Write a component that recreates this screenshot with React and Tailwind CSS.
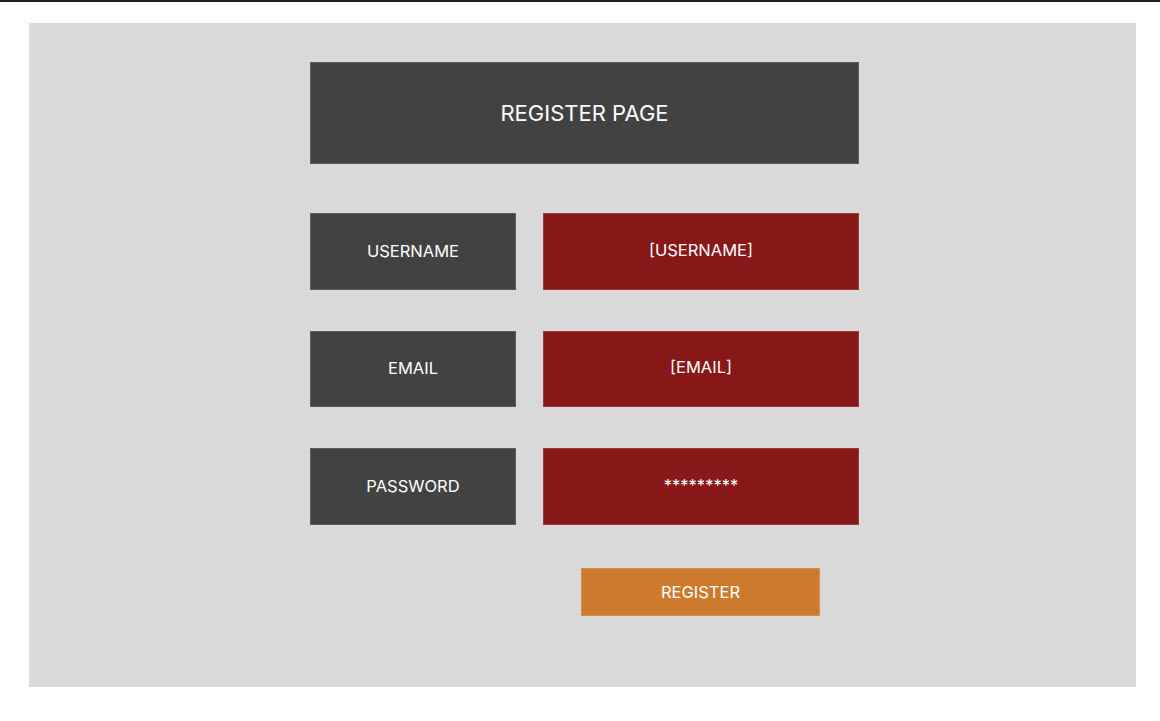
import React from 'react';

const rows = [
    { label: 'USERNAME', value: '[USERNAME]' },
    { label: 'EMAIL', value: '[EMAIL]' },
    { label: 'PASSWORD', value: '*********' },
];

export default function App() {
    return (
        <div className="min-h-[721px] w-[1160px] bg-white font-[Inter,sans-serif]">
            <div className="h-[2px] bg-[#222222]" />
            <div className="pl-[29px] pt-[21px]">
                <div className="w-[1107px] h-[664px] bg-[#d9d9d9] pl-[281px] pt-[39px]">
                    {/* Title */}
                    <div className="w-[549px] h-[102px] bg-[#424242] shadow-[inset_0_0_0_1px_#5c5c5c] flex items-center justify-center text-white text-[22px]">
                        REGISTER PAGE
                    </div>

                    {/* Fields */}
                    <div className="mt-[49px] flex flex-col gap-[41px]">
                        {rows.map((row) => (
                            <div key={row.label} className="flex gap-[27px]">
                                <div className="w-[206px] h-[76.5px] bg-[#424242] shadow-[inset_0_0_0_1px_#5c5c5c] flex items-center justify-center text-white text-[16.5px]">
                                    {row.label}
                                </div>
                                <div className="w-[316px] h-[76.5px] bg-[#881717] shadow-[inset_0_0_0_1px_#9a3a3a] flex items-center justify-center pb-[2px] text-white text-[16.5px]">
                                    {row.value}
                                </div>
                            </div>
                        ))}
                    </div>

                    {/* Submit */}
                    <div className="mt-[43.5px] pl-[271px]">
                        <button className="w-[239px] h-[48px] bg-[#ce7a2d] shadow-[inset_0_0_0_1px_#d58d4c] flex items-center justify-center text-white text-[16.5px]">
                            REGISTER
                        </button>
                    </div>
                </div>
            </div>
        </div>
    );
}
